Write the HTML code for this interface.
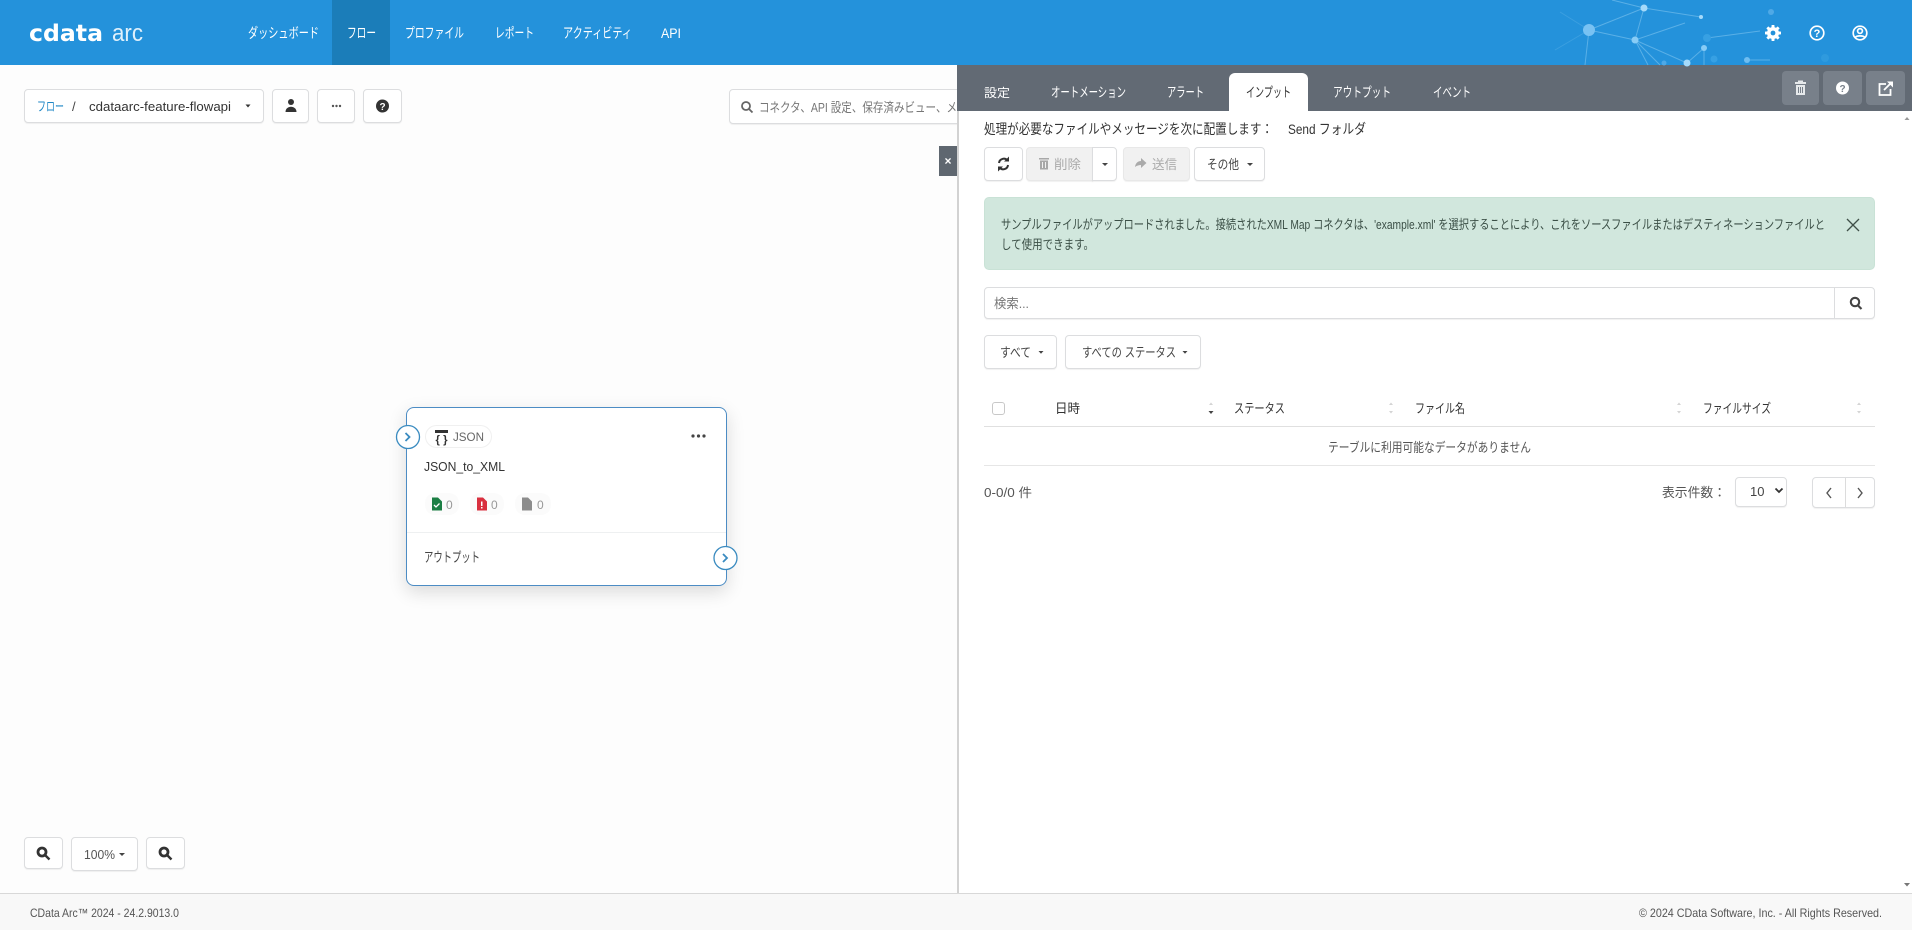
<!DOCTYPE html>
<html lang="ja">
<head>
<meta charset="utf-8">
<title>CData Arc</title>
<style>
html,body{margin:0;padding:0;width:1912px;height:930px;overflow:hidden;background:#fdfdfd;font-family:"Liberation Sans","Noto Sans CJK JP",sans-serif;}
.a{position:absolute;box-sizing:border-box;}
.btn{background:#fff;border:1px solid #dcdddf;border-radius:4px;box-shadow:0 1px 1px rgba(0,0,0,.06);}
.dis{background:#f1f1f1;border-color:#e8e8e8;}
svg text{font-family:"Liberation Sans","Noto Sans CJK JP",sans-serif;}
</style>
</head>
<body>
<!-- left toolbar -->
<div class="a btn" style="left:24px;top:89px;width:240px;height:34px;"></div>
<div class="a btn" style="left:272px;top:89px;width:37px;height:34px;"></div>
<div class="a btn" style="left:317px;top:89px;width:38px;height:34px;"></div>
<div class="a btn" style="left:363px;top:89px;width:39px;height:34px;"></div>
<div class="a btn" style="left:729px;top:89px;width:240px;height:35px;"></div>
<!-- card -->
<div class="a" style="left:406px;top:407px;width:321px;height:179px;background:#fff;border:1px solid #4c8cc4;border-radius:8px;box-shadow:0 6px 18px rgba(0,0,0,.14);"></div>
<div class="a" style="left:407px;top:532px;width:319px;height:1px;background:#eef0f1;"></div>
<div class="a" style="left:425px;top:425px;width:67px;height:23px;background:#fff;border:1px solid #f0f0f0;border-radius:12px;"></div>
<!-- zoom controls -->
<div class="a btn" style="left:24px;top:837px;width:39px;height:32px;"></div>
<div class="a btn" style="left:71px;top:837px;width:67px;height:34px;"></div>
<div class="a btn" style="left:146px;top:837px;width:39px;height:32px;"></div>
<!-- close toggle -->
<div class="a" style="left:939px;top:146px;width:19px;height:30px;background:#5f6770;"></div>
<!-- footer -->
<div class="a" style="left:0;top:893px;width:1912px;height:37px;background:#f8f8f8;border-top:1px solid #d8d8d8;"></div>
<!-- header -->
<div class="a" style="left:0;top:0;width:1912px;height:65px;background:#2492db;"></div>
<div class="a" style="left:332px;top:0;width:58px;height:65px;background:#1b7db9;"></div>
<!-- right panel -->
<div class="a" style="left:957px;top:65px;width:955px;height:828px;background:#fff;border-left:2px solid #d2d2d2;"></div>
<div class="a" style="left:957px;top:65px;width:955px;height:46px;background:#626a74;"></div>
<div class="a" style="left:1229px;top:73px;width:79px;height:38px;background:#fff;border-radius:6px 6px 0 0;"></div>
<div class="a" style="left:1782px;top:71px;width:37px;height:34px;background:#78808a;border-radius:4px;"></div>
<div class="a" style="left:1823px;top:71px;width:39px;height:34px;background:#78808a;border-radius:4px;"></div>
<div class="a" style="left:1866px;top:71px;width:39px;height:34px;background:#78808a;border-radius:4px;"></div>
<!-- toolbar -->
<div class="a btn" style="left:984px;top:147px;width:39px;height:34px;"></div>
<div class="a btn dis" style="left:1026px;top:147px;width:67px;height:34px;border-radius:4px 0 0 4px;"></div>
<div class="a btn" style="left:1092px;top:147px;width:25px;height:34px;border-radius:0 4px 4px 0;"></div>
<div class="a btn dis" style="left:1123px;top:147px;width:67px;height:34px;"></div>
<div class="a btn" style="left:1194px;top:147px;width:71px;height:34px;"></div>
<!-- alert -->
<div class="a" style="left:984px;top:197px;width:891px;height:73px;background:#d1e7dd;border:1px solid #c9e2d6;border-radius:5px;"></div>
<!-- search -->
<div class="a btn" style="left:984px;top:287px;width:891px;height:32px;"></div>
<div class="a" style="left:1834px;top:288px;width:1px;height:30px;background:#dcdddf;"></div>
<!-- filters -->
<div class="a btn" style="left:984px;top:335px;width:73px;height:34px;"></div>
<div class="a btn" style="left:1065px;top:335px;width:136px;height:34px;"></div>
<!-- table -->
<div class="a" style="left:992px;top:402px;width:13px;height:13px;background:#fff;border:1px solid #c8c8c8;border-radius:3px;"></div>
<div class="a" style="left:984px;top:426px;width:891px;height:1px;background:#e0e0e0;"></div>
<div class="a" style="left:984px;top:465px;width:891px;height:1px;background:#e6e6e6;"></div>
<div class="a btn" style="left:1735px;top:477px;width:52px;height:30px;"></div>
<div class="a btn" style="left:1812px;top:477px;width:63px;height:31px;"></div>
<div class="a" style="left:1845px;top:478px;width:1px;height:29px;background:#dcdcdc;"></div>

<svg class="a" style="left:0;top:0;" width="1912" height="930" viewBox="0 0 1912 930" xmlns="http://www.w3.org/2000/svg">
<!-- network art -->
<g stroke="#8fcdf3" stroke-width="1" fill="none" opacity=".5">
<path d="M1612 0L1644 8L1701 17M1589 30L1644 8L1635 40L1589 30M1635 40L1687 63M1635 40L1685 23M1635 40L1660 65M1635 40L1648 65M1589 30L1585 65M1687 63L1704 48L1704 65M1707 38L1760 31M1747 60L1770 60"/>
</g>
<g stroke="#8fcdf3" stroke-width="1" fill="none" opacity=".22"><path d="M1589 30L1560 12M1589 30L1555 50"/></g>
<g fill="#a5dafa">
<circle cx="1589" cy="30" r="6" fill="#78c2f3"/><circle cx="1644" cy="8" r="3.500"/><circle cx="1635" cy="40" r="3.500" fill="#88ccf6"/><circle cx="1701" cy="17" r="2"/><circle cx="1687" cy="63" r="3.500"/><circle cx="1704" cy="48" r="3" fill="#88ccf6"/><circle cx="1747" cy="60" r="3" fill="#6fbdf0"/><circle cx="1771" cy="12" r="3" fill="#4fa9e6"/><circle cx="1707" cy="38" r="4" fill="#37a0e3"/><circle cx="1714" cy="59" r="3.500" fill="#37a0e3"/><circle cx="1825" cy="58" r="4" fill="#2f9ade"/><circle cx="1664" cy="63" r="2.500" fill="#4fa9e6"/>
</g>
<!-- logo -->
<text x="29" y="41" font-size="23" font-weight="700" fill="#fff" textLength="74" lengthAdjust="spacingAndGlyphs" style="font-family:'DejaVu Sans',sans-serif;">cdata</text>
<text x="112" y="41" font-size="24" fill="#dff0fb" textLength="31" lengthAdjust="spacingAndGlyphs">arc</text>
<!-- nav -->
<g font-size="14" fill="#fff">
<text x="248" y="38" textLength="71" lengthAdjust="spacingAndGlyphs">ダッシュボード</text>
<text x="347" y="38" textLength="29" lengthAdjust="spacingAndGlyphs">フロー</text>
<text x="405" y="38" textLength="59" lengthAdjust="spacingAndGlyphs">プロファイル</text>
<text x="495" y="38" textLength="39" lengthAdjust="spacingAndGlyphs">レポート</text>
<text x="563" y="38" textLength="69" lengthAdjust="spacingAndGlyphs">アクティビティ</text>
<text x="661" y="38" textLength="20" lengthAdjust="spacingAndGlyphs">API</text>
</g>
<!-- header icons -->
<g transform="translate(1773,33)" fill="#fff">
<circle r="4.400" fill="none" stroke="#fff" stroke-width="3.200"/>
<rect x="-1.500" y="-8" width="3" height="16" rx=".6"/><rect x="-1.500" y="-8" width="3" height="16" rx=".6" transform="rotate(45)"/><rect x="-1.500" y="-8" width="3" height="16" rx=".6" transform="rotate(90)"/><rect x="-1.500" y="-8" width="3" height="16" rx=".6" transform="rotate(135)"/>
<circle r="2.400" fill="#2492db"/>
</g>
<g fill="none" stroke="#fff" stroke-width="1.700">
<circle cx="1817" cy="33" r="6.800"/>
<circle cx="1860" cy="33" r="6.800"/>
<circle cx="1860" cy="31" r="2.400"/>
<path d="M1855.300 37.500c1.200-2.200 8.200-2.200 9.400 0"/>
</g>
<text x="1817" y="37" font-size="11" font-weight="700" fill="#fff" text-anchor="middle">?</text>
<!-- breadcrumb -->
<text x="37" y="111" font-size="13" fill="#1f87c6" textLength="27" lengthAdjust="spacingAndGlyphs">フロー</text>
<text x="72" y="111" font-size="13" fill="#444">/</text>
<text x="89" y="111" font-size="12.500" fill="#333" textLength="142" lengthAdjust="spacingAndGlyphs">cdataarc-feature-flowapi</text>
<path d="M245.500 104.500h5l-2.500 3z" fill="#333"/>
<circle cx="291" cy="102" r="3" fill="#333"/><path d="M285.500 112c0-7 11-7 11 0z" fill="#333"/>
<g fill="#555"><circle cx="333" cy="106" r="1.200"/><circle cx="336.500" cy="106" r="1.200"/><circle cx="340" cy="106" r="1.200"/></g>
<circle cx="382.500" cy="106" r="6.500" fill="#333"/><text x="382.500" y="110" font-size="10" font-weight="700" fill="#fff" text-anchor="middle">?</text>
<!-- search left -->
<g fill="none" stroke="#666" stroke-width="1.800"><circle cx="746" cy="106" r="4"/><path d="M749 109l3.500 3.500"/></g>
<text x="759" y="112" font-size="13" fill="#777" textLength="198" lengthAdjust="spacingAndGlyphs">コネクタ、API 設定、保存済みビュー、メ</text>
<text x="948" y="165" font-size="12" font-weight="700" fill="#fff" text-anchor="middle">×</text>
<!-- card contents -->
<g font-size="12">
<rect x="435" y="430" width="13" height="3" fill="#333"/>
<text x="441.500" y="443" font-size="11" font-weight="700" fill="#333" text-anchor="middle" textLength="12" lengthAdjust="spacingAndGlyphs">{ }</text>
<text x="453" y="441" font-size="12" fill="#666" textLength="31" lengthAdjust="spacingAndGlyphs">JSON</text>
</g>
<g fill="#444"><circle cx="693" cy="436" r="1.600"/><circle cx="698.500" cy="436" r="1.600"/><circle cx="704" cy="436" r="1.600"/></g>
<text x="424" y="471" font-size="13" fill="#333" textLength="81" lengthAdjust="spacingAndGlyphs">JSON_to_XML</text>
<g>
<rect x="425" y="493" width="34" height="22" rx="10" fill="#fbfbfb"/>
<rect x="470" y="493" width="34" height="22" rx="10" fill="#fbfbfb"/>
<rect x="515" y="493" width="36" height="22" rx="10" fill="#fbfbfb"/>
<path d="M432 497.500h6l4 4v9h-10z" fill="#1c7f45"/><path d="M434 505l2 2 3.500-3.500" stroke="#fff" stroke-width="1.300" fill="none"/>
<path d="M477 497.500h6l4 4v9h-10z" fill="#d9303f"/><rect x="481" y="501.500" width="1.500" height="4.500" fill="#fff"/><rect x="481" y="507" width="1.500" height="1.500" fill="#fff"/>
<path d="M522 497.500h6l4 4v9h-10z" fill="#8c8c8c"/>
</g>
<g font-size="12" fill="#999">
<text x="446" y="509">0</text><text x="491" y="509">0</text><text x="537" y="509">0</text>
</g>
<text x="424" y="562" font-size="13.500" fill="#444" textLength="56" lengthAdjust="spacingAndGlyphs">アウトプット</text>
<g>
<circle cx="408" cy="437" r="11.500" fill="#fff" stroke="#3a8bc0" stroke-width="1.300"/>
<path d="M405.500 433l4 4-4 4" fill="none" stroke="#3a8bc0" stroke-width="1.800"/>
<circle cx="725.500" cy="558" r="11.500" fill="#fff" stroke="#3a8bc0" stroke-width="1.300"/>
<path d="M723 554l4 4-4 4" fill="none" stroke="#3a8bc0" stroke-width="1.800"/>
</g>
<!-- zoom controls -->
<g fill="none" stroke="#333">
<circle cx="42" cy="852" r="4" stroke-width="2.800"/><path d="M45.500 855.500l4 4" stroke-width="2.400"/><path d="M40.500 852h3M42 850.500v3" stroke-width="1" stroke="#fff"/>
<circle cx="164" cy="852" r="4" stroke-width="2.800"/><path d="M167.500 855.500l4 4" stroke-width="2.400"/><path d="M162.500 852h3" stroke-width="1" stroke="#fff"/>
</g>
<text x="84" y="859" font-size="13" fill="#555" textLength="31" lengthAdjust="spacingAndGlyphs">100%</text>
<path d="M119 853h6l-3 3z" fill="#444"/>
<!-- footer -->
<text x="30" y="917" font-size="12" fill="#555" textLength="149" lengthAdjust="spacingAndGlyphs">CData Arc™ 2024 - 24.2.9013.0</text>
<text x="1639" y="917" font-size="12" fill="#555" textLength="243" lengthAdjust="spacingAndGlyphs">© 2024 CData Software, Inc. - All Rights Reserved.</text>
<!-- panel tabs -->
<g font-size="13.500" fill="#fff">
<text x="984" y="97" font-size="12" textLength="26" lengthAdjust="spacingAndGlyphs">設定</text>
<text x="1051" y="97" textLength="75" lengthAdjust="spacingAndGlyphs">オートメーション</text>
<text x="1167" y="97" textLength="37" lengthAdjust="spacingAndGlyphs">アラート</text>
<text x="1246" y="97" textLength="45" lengthAdjust="spacingAndGlyphs" fill="#333">インプット</text>
<text x="1333" y="97" textLength="58" lengthAdjust="spacingAndGlyphs">アウトプット</text>
<text x="1433" y="97" textLength="38" lengthAdjust="spacingAndGlyphs">イベント</text>
</g>
<!-- panel buttons icons -->
<g fill="#e6e9eb"><rect x="1795" y="82" width="11" height="2"/><rect x="1798" y="80.500" width="5" height="1.500"/><path d="M1796 85h9v10h-9zM1798 87v6h1v-6zM1800 87v6h1v-6zM1802 87v6h1v-6z" fill-rule="evenodd"/></g>
<circle cx="1842.500" cy="88" r="6.500" fill="#fff"/><text x="1842.500" y="92" font-size="10" font-weight="700" fill="#78808a" text-anchor="middle">?</text>
<g fill="none" stroke="#fff" stroke-width="1.800"><path d="M1886 84h-6.500v11h11v-6"/><path d="M1884 90l7-7"/></g>
<path d="M1887 81.500h6v6z" fill="#fff"/>
<!-- heading -->
<text x="984" y="134" font-size="14" fill="#333" textLength="289" lengthAdjust="spacingAndGlyphs">処理が必要なファイルやメッセージを次に配置します：</text>
<text x="1288" y="134" font-size="14" fill="#333" textLength="78" lengthAdjust="spacingAndGlyphs">Send フォルダ</text>
<path d="M1904.500 120l2.500-3 2.500 3z" fill="#999"/>
<path d="M1904 883l3 3.500 3-3.500z" fill="#777"/>
<!-- toolbar icons -->
<g fill="none" stroke="#333" stroke-width="2"><path d="M999 163a4.800 4.800 0 0 1 8.500-2.500"/><path d="M1008 165a4.800 4.800 0 0 1-8.500 2.500"/></g>
<path d="M1009 156.500v5h-5zM998 171.500v-5h5z" fill="#333"/>
<g fill="#a8a8a8"><rect x="1039" y="158" width="10" height="1.500"/><path d="M1040 160.500h8v9h-8zM1042 162v6h1v-6zM1045 162v6h1v-6z" fill-rule="evenodd"/></g>
<text x="1054" y="169" font-size="13" fill="#aaa" textLength="27" lengthAdjust="spacingAndGlyphs">削除</text>
<path d="M1102 163h6l-3 3z" fill="#444"/>
<path d="M1135 167c.5-4 3-6 6-6v-3l5.500 5-5.500 5v-3c-2 0-4 .5-6 2z" fill="#aaa"/>
<text x="1152" y="169" font-size="13" fill="#aaa" textLength="25" lengthAdjust="spacingAndGlyphs">送信</text>
<text x="1207" y="169" font-size="13" fill="#444" textLength="32" lengthAdjust="spacingAndGlyphs">その他</text>
<path d="M1247 163h6l-3 3z" fill="#444"/>
<!-- alert -->
<text x="1001" y="229" font-size="13" fill="#3b4f46" textLength="824" lengthAdjust="spacingAndGlyphs">サンプルファイルがアップロードされました。接続されたXML Map コネクタは、'example.xml' を選択することにより、これをソースファイルまたはデスティネーションファイルと</text>
<text x="1001" y="249" font-size="13" fill="#3b4f46" textLength="93" lengthAdjust="spacingAndGlyphs">して使用できます。</text>
<path d="M1847 219l12 12M1859 219l-12 12" stroke="#3f4f48" stroke-width="1.300" fill="none"/>
<!-- search -->
<text x="994" y="308" font-size="13" fill="#777" textLength="35" lengthAdjust="spacingAndGlyphs">検索...</text>
<g fill="none" stroke="#444" stroke-width="2.100"><circle cx="1855" cy="302" r="4.200"/><path d="M1858 305.500l3.500 3.500"/></g>
<!-- filters -->
<text x="1000" y="357" font-size="13" fill="#444" textLength="31" lengthAdjust="spacingAndGlyphs">すべて</text>
<path d="M1038.500 351h5l-2.500 2.800z" fill="#444"/>
<text x="1082" y="357" font-size="13" fill="#444" textLength="94" lengthAdjust="spacingAndGlyphs">すべての ステータス</text>
<path d="M1182.500 351h5l-2.500 2.800z" fill="#444"/>
<!-- table head -->
<g font-size="13" fill="#333">
<text x="1055" y="413" textLength="25" lengthAdjust="spacingAndGlyphs">日時</text>
<text x="1234" y="413" textLength="51" lengthAdjust="spacingAndGlyphs">ステータス</text>
<text x="1415" y="413" textLength="50" lengthAdjust="spacingAndGlyphs">ファイル名</text>
<text x="1703" y="413" textLength="68" lengthAdjust="spacingAndGlyphs">ファイルサイズ</text>
</g>
<g fill="#d4d4d4">
<path d="M1209 405l2-2.500 2 2.500z"/>
<path d="M1389 405l2-2.500 2 2.500zM1389 411l2 2.500 2-2.500z"/>
<path d="M1677 405l2-2.500 2 2.500zM1677 411l2 2.500 2-2.500z"/>
<path d="M1857 405l2-2.500 2 2.500zM1857 411l2 2.500 2-2.500z"/>
</g>
<path d="M1208.500 411l2.500 3 2.500-3z" fill="#444"/>
<text x="1328" y="452" font-size="13" fill="#555" textLength="203" lengthAdjust="spacingAndGlyphs">テーブルに利用可能なデータがありません</text>
<text x="984" y="497" font-size="12.500" fill="#555" textLength="48" lengthAdjust="spacingAndGlyphs">0-0/0 件</text>
<text x="1662" y="497" font-size="13" fill="#555" textLength="64" lengthAdjust="spacingAndGlyphs">表示件数：</text>
<text x="1750" y="496" font-size="13" fill="#444">10</text>
<path d="M1775.500 488.500l3.500 3.500 3.500-3.500" fill="none" stroke="#333" stroke-width="1.800"/>
<path d="M1831 488l-4 5 4 5M1858 488l4 5-4 5" fill="none" stroke="#555" stroke-width="1.400"/>
</svg>
</body>
</html>
